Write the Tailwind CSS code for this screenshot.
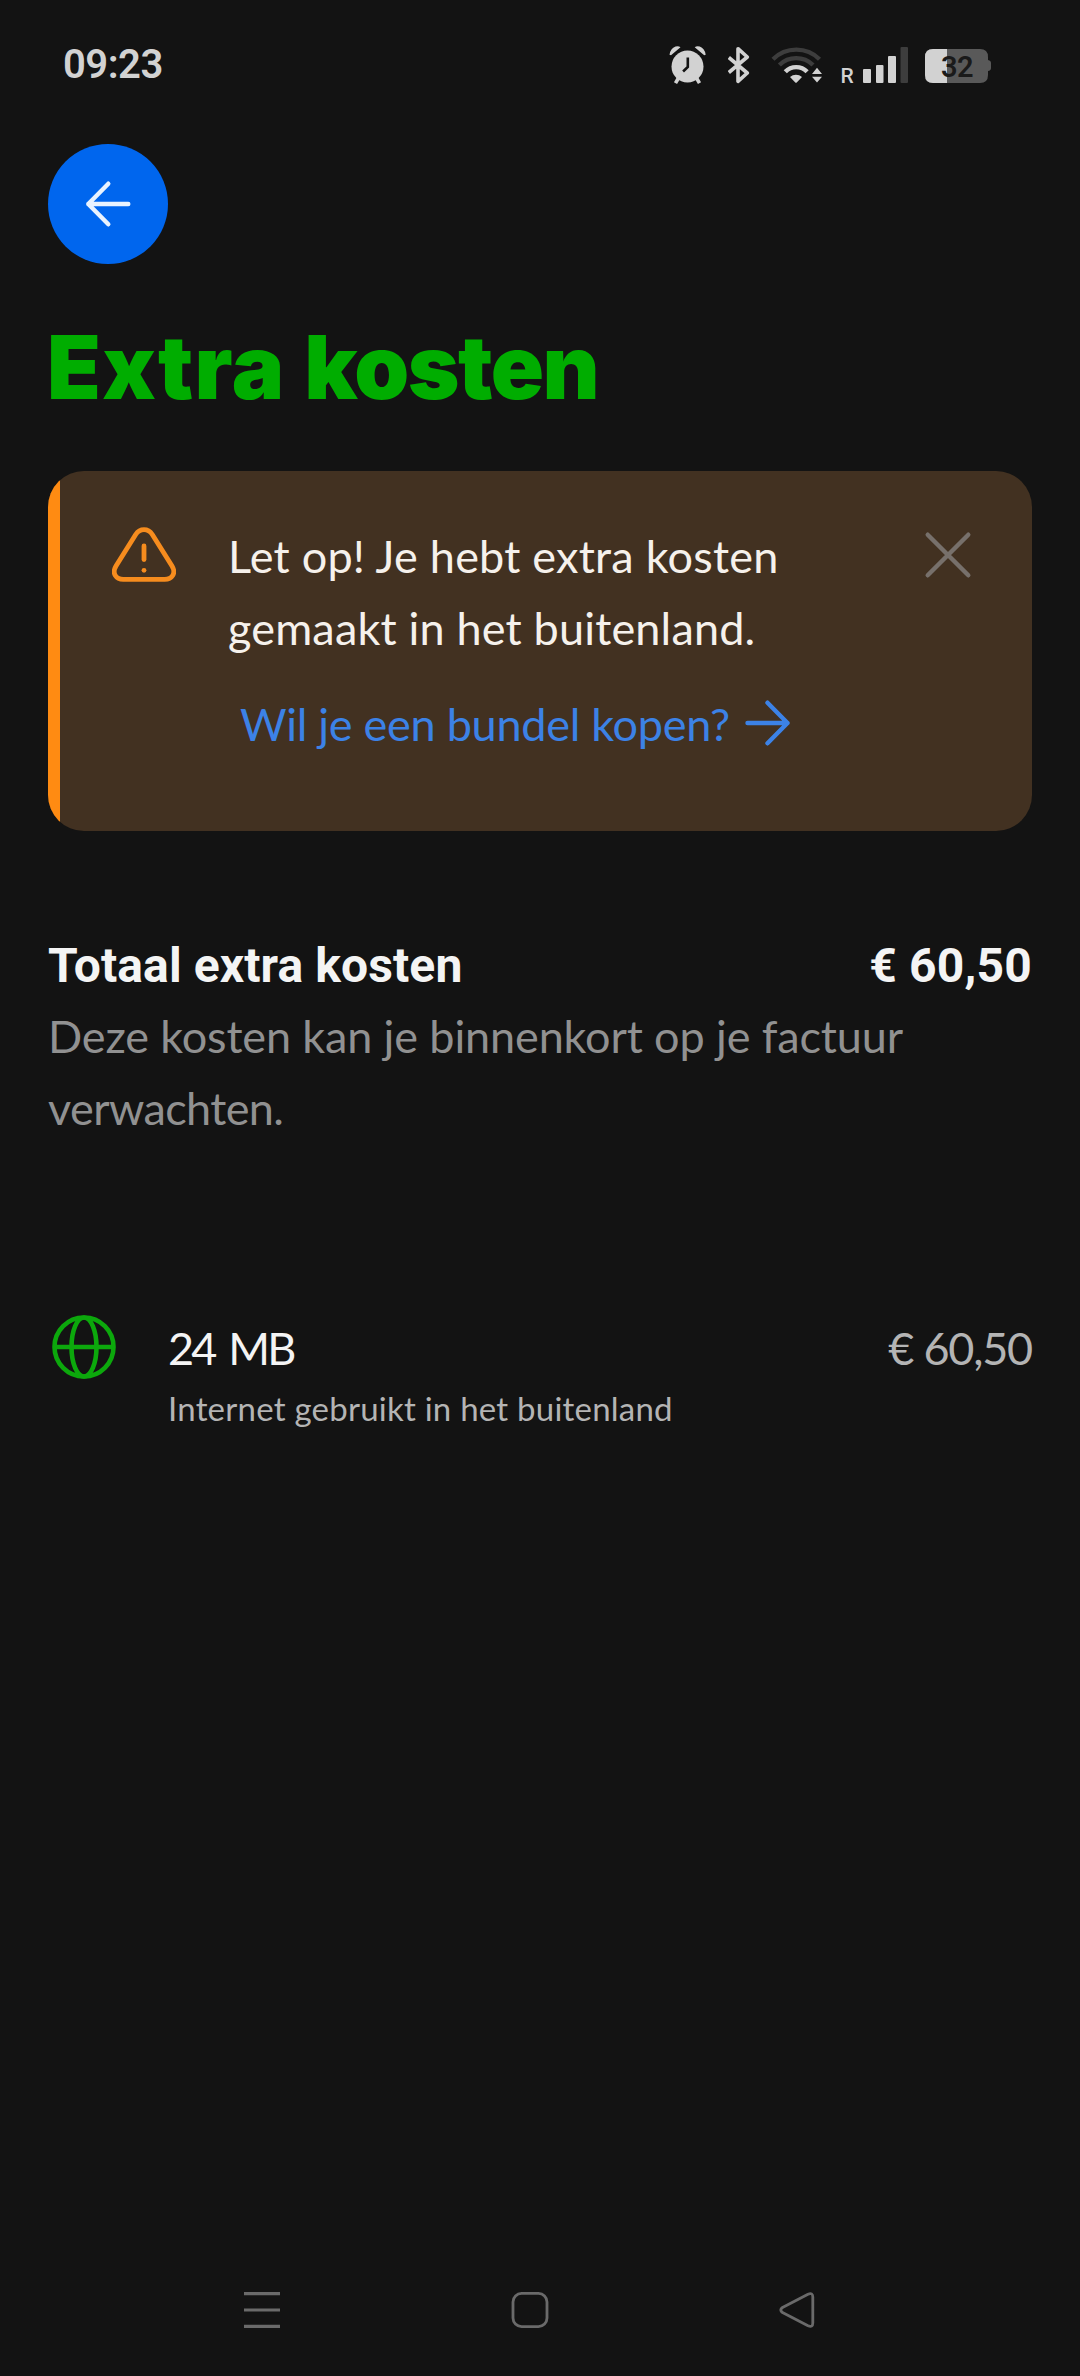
<!DOCTYPE html>
<html lang="nl">
<head>
<meta charset="utf-8">
<title>Extra kosten</title>
<script src="https://cdn.jsdelivr.net/npm/@tailwindcss/browser@4"></script>
</head>
<body class="bg-[#131313]">
<div class="flex h-[2376px] w-[1080px] flex-col overflow-hidden bg-[#131313] font-['Lato',sans-serif] text-[45px] text-[#f4f4f4]">

  <!-- Status bar -->
  <header class="flex h-[130px] shrink-0 items-center pr-[87px] pl-[63px] text-[#d2d2d2]">
    <span class="mr-auto font-['Roboto',sans-serif] text-[40px] leading-none font-semibold tracking-[-0.5px]">09:23</span>
    <!-- Alarm -->
    <svg class="mr-[21px] h-10 w-[38px]" viewBox="669 45 38 40" fill="currentColor">
      <path d="M675.500 46.600q3-1 5 .7l-9.500 7.900-1.500-.4q1-6.400 6-8.200zM699.700 46.600q-3-1-5 .7l9.500 7.900 1.500-.4q-1-6.400-6-8.200z" />
      <circle cx="687.500" cy="66.500" r="16" />
      <path d="m678.500 78-3 5.200M696.500 78l3 5.200" stroke="currentColor" stroke-width="3.600" />
      <path d="M687.800 57.500v9.500l-4.700 4.500" fill="none" stroke="#131313" stroke-width="2.600" />
    </svg>
    <!-- Bluetooth -->
    <svg class="mr-[20px] h-10 w-[23px]" viewBox="728 45 23 40" fill="none" stroke="currentColor" stroke-width="3.600">
      <path d="m728.800 57.500 18.500 15.500-9.300 8.300V48.700l9.300 8.300-18.500 15.500" stroke-linejoin="round" />
    </svg>
    <!-- Wi-Fi -->
    <svg class="mr-[17px] h-10 w-[52px]" viewBox="771 45 52 40" fill="none" stroke-width="4.400">
      <path d="M773 59.200a33 33 0 0 1 46.500 0M779.400 65a24 24 0 0 1 33.600 0" stroke="#3d3d3d" />
      <path d="M785.300 71.800a15 15 0 0 1 21.800 0" stroke="currentColor" />
      <path d="M790 77a9.500 9.500 0 0 1 12 0l-5.500 5.700h-1zM812 74l5-6.300 5 6.300zM812 76.800l5 5.700 5-5.700z" fill="currentColor" />
    </svg>
    <!-- Mobile signal, roaming -->
    <svg class="mr-[17px] h-10 w-[68px]" viewBox="840 45 68 40" fill="currentColor">
      <text x="840.500" y="82.700" class="font-['Roboto',sans-serif] text-[21px] font-medium">R</text>
      <rect x="863" y="69" width="8" height="14" rx="1" />
      <rect x="876" y="65" width="7.500" height="18" rx="1" />
      <rect x="888" y="56" width="8" height="27" rx="1" />
      <rect x="900.500" y="47" width="7.500" height="36" rx="1" fill="#3d3d3d" />
    </svg>
    <!-- Battery -->
    <svg class="h-10 w-[68px]" viewBox="925 45 68 40">
      <path d="M933 49h47q8 0 8 8v3q3 .5 3 3v5q0 2.500-3 3v4q0 8-8 8h-47q-8 0-8-8V57q0-8 8-8z" fill="#595959" />
      <path d="M933 49h14v34h-14q-8 0-8-8V57q0-8 8-8z" fill="#d2d2d2" />
      <text x="957" y="77" text-anchor="middle" fill="#1a1a1a" class="font-['Roboto',sans-serif] text-[29px] font-semibold tracking-[-0.5px]">32</text>
    </svg>
  </header>

  <main class="flex grow flex-col px-12">
    <button class="mt-[14px] flex size-[120px] shrink-0 items-center justify-center rounded-full bg-[#0066ee]" aria-label="Terug">
      <svg class="size-12" viewBox="0 0 48 48" fill="none" stroke="#e9f3ff" stroke-width="4.400" stroke-linecap="round" stroke-linejoin="round">
        <path d="M24.300 3.700 4.300 24l20 20.300M4.300 24h40" />
      </svg>
    </button>

    <h1 class="mt-[55px] -ml-px font-['Inter',sans-serif] text-[88px] leading-[96px] font-black whitespace-nowrap text-[#00ad00]"><span class="tracking-[1.3px]">Extra </span><span class="tracking-[-1.5px]">kosten</span></h1>

    <section class="mt-14 flex h-[360px] shrink-0 overflow-hidden rounded-[36px] bg-[#423121]">
      <div class="w-3 bg-[#ff8b12]"></div>
      <svg class="mt-[56px] ml-[52px] h-[58px] w-16" viewBox="0 0 64 58" fill="none" stroke="#f68c1e" stroke-width="4.800" stroke-linecap="round">
        <path d="M23.700 7.500q3.200-4.800 8.300-4.800t8.300 4.800l19.700 31.600c4.500 7.500-.2 13.300-7.300 13.300H11.300C4.200 52.400-.5 46.600 4 39.100z" />
        <path d="M32 19V32.500" />
        <circle cx="32" cy="43.300" r="2.400" fill="#f68c1e" stroke="none" />
      </svg>
      <div class="ml-[52px] grow pt-[49px] leading-[72px]">
        <p class="text-[#f6f1ec]"><span class="tracking-[0.23px]">Let op! Je hebt extra kosten</span><br><span class="tracking-[0.18px]">gemaakt in het buitenland.</span></p>
        <a class="mt-[24px] flex items-center pl-[12px] text-[#3c82e6]"><span class="tracking-[-0.27px]">Wil je een bundel kopen?</span>
          <svg class="mb-[2px] ml-[14px] size-12" viewBox="0 0 48 48" fill="none" stroke="currentColor" stroke-width="4.400" stroke-linecap="round" stroke-linejoin="round">
            <path d="M23.500 3.700 43.500 24l-20 20.300M43.500 24h-40" />
          </svg>
        </a>
      </div>
      <svg class="mt-[60px] mr-[60px] size-12" viewBox="0 0 48 48" stroke="#77706b" stroke-width="4.400" stroke-linecap="round">
        <path d="m3.700 3.700 40.600 40.600M44.300 3.700 3.700 44.300" />
      </svg>
    </section>

    <section class="mt-[99px]">
      <div class="flex justify-between font-['Roboto',sans-serif] text-[48px] leading-[71px] font-bold">
        <h2 class="tracking-[0.1px]">Totaal extra kosten</h2>
        <span class="tracking-[0.2px]">€ 60,50</span>
      </div>
      <p class="-mt-px leading-[72px] text-[#919191]"><span class="tracking-[-0.13px]">Deze kosten kan je binnenkort op je factuur</span><br><span class="tracking-[-0.6px]">verwachten.</span></p>
    </section>

    <section class="mt-[171px] flex">
      <svg class="ml-1 size-16" viewBox="0 0 64 64" fill="none" stroke="#0ca80c" stroke-width="4.600">
        <circle cx="32" cy="32" r="29.500" />
        <ellipse cx="32" cy="32" rx="12.500" ry="29.500" />
        <path d="M2.500 32h59" />
      </svg>
      <div class="ml-[52px] grow pt-[3px]">
        <p class="leading-[60px] tracking-[-2.8px] [word-spacing:5px]">24 MB</p>
        <p class="mt-[5px] text-[33px] leading-[50px] tracking-[0.23px] text-[#b4b4b4]">Internet gebruikt in het buitenland</p>
      </div>
      <span class="pt-[3px] leading-[60px] tracking-[-1.2px] text-[#b4b4b4]">€ 60,50</span>
    </section>
  </main>

  <!-- System navigation -->
  <nav class="flex h-[132px] shrink-0 items-center justify-between pr-[264px] pl-[243px] text-[#6a6a6a]">
    <svg class="h-10 w-[38px]" viewBox="0 0 38 40" stroke="currentColor" stroke-width="3.200"><path d="M1 3.700h36M1 20h36M1 36.300h36" /></svg>
    <svg class="h-10 w-[38px]" viewBox="0 0 38 40" fill="none" stroke="currentColor" stroke-width="2.800"><rect x="2" y="3.400" width="34" height="33.200" rx="8.500" /></svg>
    <svg class="h-10 w-[38px]" viewBox="0 0 38 40" fill="none" stroke="currentColor" stroke-width="2.800" stroke-linejoin="round"><path d="M4.500 17.500 30 4.200q4.800-2 4.800 2.800v26q0 4.800-4.800 2.800L4.500 22.500q-3.500-2.500 0-5z" /></svg>
  </nav>
</div>
</body>
</html>
